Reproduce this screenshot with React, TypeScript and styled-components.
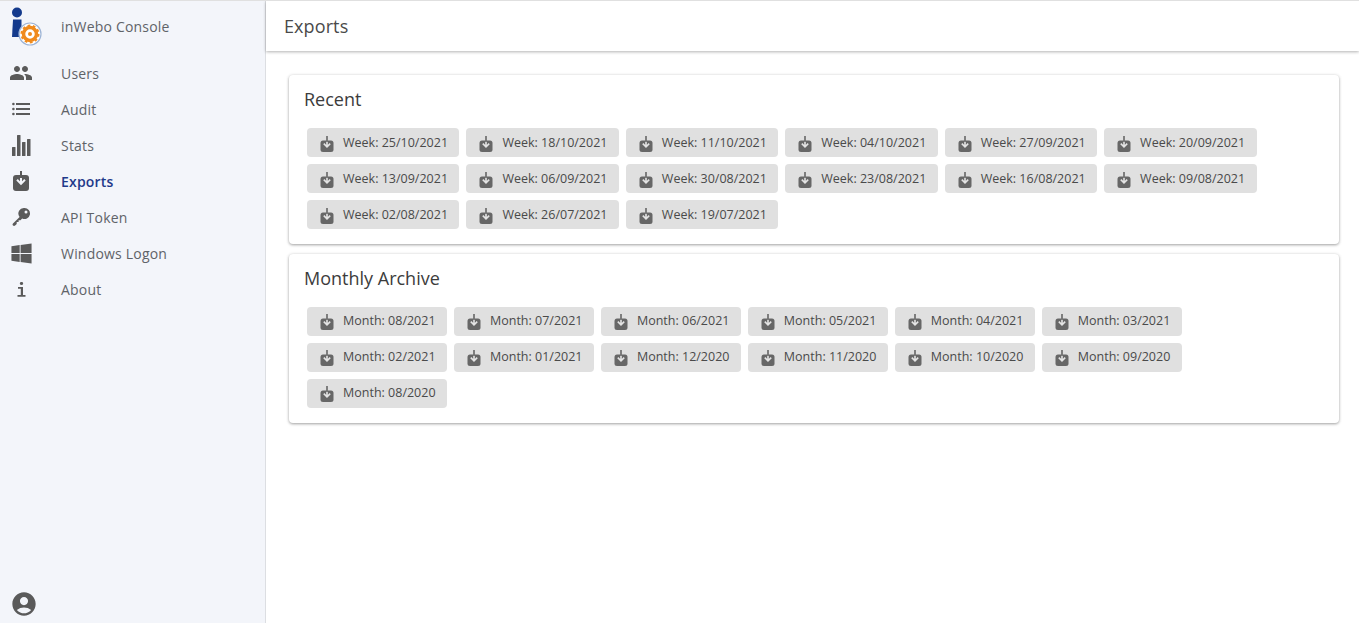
import React from "react";
import styled, { createGlobalStyle } from "styled-components";
import { MdPeople, MdAccountCircle } from "react-icons/md";
import { FaWindows } from "react-icons/fa";

const GlobalStyle = createGlobalStyle`
  html, body {
    margin: 0;
    padding: 0;
    height: 100%;
    background: #fff;
    font-family: "Open Sans", "Liberation Sans", sans-serif;
  }
`;

const Page = styled.div`
  display: flex;
  height: 623px;
  overflow: hidden;
  border-top: 1px solid #e0e0e0;
  box-sizing: border-box;
`;

// Left navigation
const Sidebar = styled.aside`
  display: flex;
  flex-direction: column;
  width: 266px;
  flex-shrink: 0;
  box-sizing: border-box;
  background: #f3f5fa;
  border-right: 1px solid #dcdee2;
`;

const Brand = styled.div`
  display: flex;
  align-items: center;
  height: 54px;
  padding: 0 0 4px 10px;
  box-sizing: border-box;
  color: #5f6368;
  font-size: 14px;
  letter-spacing: 0.2px;

  svg {
    margin-bottom: 4px;
  }
`;

const BrandLabel = styled.span`
  margin-left: 19px;
`;

const NavList = styled.nav`
  display: flex;
  flex-direction: column;
`;

const NavItem = styled.div<{ $active?: boolean }>`
  display: flex;
  align-items: center;
  height: 36px;
  font-size: 14px;
  letter-spacing: 0.2px;
  font-weight: ${(p) => (p.$active ? 600 : 400)};
  color: ${(p) => (p.$active ? "#1f3a8a" : "#5f6368")};
`;

const NavIcon = styled.span`
  display: flex;
  align-items: center;
  justify-content: center;
  width: 61px;
  padding-right: 19px;
  box-sizing: border-box;
  color: #5a5a5a;
`;

const SidebarFoot = styled.div`
  display: flex;
  margin-top: auto;
  height: 33px;
  padding-left: 10px;
  color: #5a5a5a;
`;

// Main area
const Main = styled.main`
  display: flex;
  flex-direction: column;
  flex: 1;
  min-width: 0;
`;

const TopBar = styled.header`
  display: flex;
  align-items: center;
  height: 50px;
  padding-left: 18px;
  background: #fff;
  color: #4a4a4a;
  font-size: 18px;
  letter-spacing: 0.1px;
  box-shadow: 0 1px 3px rgba(0, 0, 0, 0.3);
`;

const Content = styled.div`
  display: flex;
  flex-direction: column;
  gap: 9.6px;
  padding: 24px 20px 0 23px;
`;

const Card = styled.section`
  padding: 0 15px 15px 18px;
  background: #fff;
  border-radius: 4px;
  box-shadow: 0 1px 3px rgba(0, 0, 0, 0.35), 0 0 4px rgba(0, 0, 0, 0.06);
`;

const CardTitle = styled.h2`
  margin: 0 0 0 -3px;
  height: 53px;
  line-height: 49px;
  font-size: 18px;
  font-weight: 400;
  color: #3c3c3c;
`;

const ChipRows = styled.div`
  display: flex;
  flex-direction: column;
  gap: 7px;
`;

const ChipRow = styled.div`
  display: flex;
  gap: 7px;
`;

const Chip = styled.button`
  display: flex;
  align-items: center;
  height: 29px;
  padding: 0 11.4px 0 13px;
  border: 0;
  border-radius: 4px;
  background: #e0e0e0;
  color: #4a4a4a;
  font-family: inherit;
  font-size: 12.5px;
  white-space: nowrap;
`;

const ChipLabel = styled.span`
  margin-left: 9px;
  margin-top: -1px;
`;

const ExportIcon = () => (
  <svg width="14" height="16" viewBox="0 0 14 16" style={{ marginTop: 2 }}>
    <rect x="0.500" y="4.500" width="13" height="11.500" rx="2.500" fill="#676767" />
    <path d="M7 4.500v5.500M3.800 7.600 7 10.800l3.200-3.200" fill="none" stroke="#e4e4e4" strokeWidth="1.600" />
    <rect x="6.200" y="0" width="1.600" height="6" fill="#676767" />
  </svg>
);

const ListIcon = () => (
  <svg width="18" height="14" viewBox="0 0 18 14" fill="#5a5a5a">
    <circle cx="1.400" cy="2" r="1.300" />
    <circle cx="1.400" cy="7" r="1.300" />
    <circle cx="1.400" cy="12" r="1.300" />
    <rect x="4" y="1" width="14" height="2" />
    <rect x="4" y="6" width="14" height="2" />
    <rect x="4" y="11" width="14" height="2" />
  </svg>
);

const StatsIcon = () => (
  <svg width="19" height="21" viewBox="0 0 19 21" fill="#5a5a5a">
    <rect x="0" y="12" width="3.500" height="9" rx="0.500" />
    <rect x="5" y="0" width="3.500" height="21" rx="0.500" />
    <rect x="10" y="7" width="3.500" height="14" rx="0.500" />
    <rect x="15" y="4" width="3.500" height="17" rx="0.500" />
  </svg>
);

const NavExportIcon = () => (
  <svg width="16" height="20" viewBox="0 0 16 20">
    <rect x="0" y="4" width="16" height="16" rx="3" fill="#5a5a5a" />
    <path d="M8 4v8.500M4 8.800 8 12.800l4-4" fill="none" stroke="#f3f5fa" strokeWidth="2" />
    <rect x="7" y="0" width="2" height="7" fill="#5a5a5a" />
  </svg>
);

const KeyIcon = () => (
  <svg width="20" height="20" viewBox="0 0 20 20" fill="#5a5a5a">
    <path d="M13.500 1a5.500 5.500 0 1 1-2.300 10.500L9.500 13.200H7.600v1.900H5.700V17l-1.600 1.600c-.6.600-1.500.6-2.100 0s-.6-1.500 0-2.100l6.600-6.600A5.500 5.500 0 0 1 13.500 1z" />
    <circle cx="15" cy="5" r="1.500" fill="#f3f5fa" />
  </svg>
);

const InfoGlyph = () => (
  <svg width="9" height="15" viewBox="0 0 9 15" fill="#5a5a5a">
    <circle cx="4.500" cy="1.500" r="1.600" />
    <path d="M1 5h5v8h2.500v1.700H.5v-1.700h3.300V6.700H1z" />
  </svg>
);

const Logo = () => (
  <svg width="32" height="46" viewBox="0 0 32 46">
    <circle cx="7" cy="11.500" r="5" fill="#143a8c" />
    <path d="M3 18.500h8.500V36H2z" fill="#143a8c" />
    <circle cx="20" cy="33" r="11" fill="#fff" stroke="#9db4d6" strokeWidth="1.200" />
    <circle cx="20" cy="33" r="6.500" fill="none" stroke="#f08a1c" strokeWidth="3.500" />
    <circle cx="20" cy="33" r="8.500" fill="none" stroke="#f08a1c" strokeWidth="2" strokeDasharray="2.700 2.640" />
    <circle cx="20" cy="33" r="2" fill="#f08a1c" />
  </svg>
);

const navItems: { label: string; icon: React.ReactNode; active?: boolean }[] = [
  { label: "Users", icon: <MdPeople size={24} /> },
  { label: "Audit", icon: <ListIcon /> },
  { label: "Stats", icon: <StatsIcon /> },
  { label: "Exports", icon: <NavExportIcon />, active: true },
  { label: "API Token", icon: <KeyIcon /> },
  { label: "Windows Logon", icon: <FaWindows size={23} /> },
  { label: "About", icon: <InfoGlyph /> },
];

const weeks = [
  "25/10/2021", "18/10/2021", "11/10/2021", "04/10/2021", "27/09/2021", "20/09/2021",
  "13/09/2021", "06/09/2021", "30/08/2021", "23/08/2021", "16/08/2021", "09/08/2021",
  "02/08/2021", "26/07/2021", "19/07/2021",
].map((d) => `Week: ${d}`);

const months = [
  "08/2021", "07/2021", "06/2021", "05/2021", "04/2021", "03/2021",
  "02/2021", "01/2021", "12/2020", "11/2020", "10/2020", "09/2020",
  "08/2020",
].map((d) => `Month: ${d}`);

// the app lays these out in rows of six
const chunk = (items: string[], size = 6) => {
  const rows: string[][] = [];
  for (let i = 0; i < items.length; i += size) rows.push(items.slice(i, i + size));
  return rows;
};

const ExportCard = ({ title, items }: { title: string; items: string[] }) => (
  <Card>
    <CardTitle>{title}</CardTitle>
    <ChipRows>
      {chunk(items).map((row, i) => (
        <ChipRow key={i}>
          {row.map((label) => (
            <Chip key={label}>
              <ExportIcon />
              <ChipLabel>{label}</ChipLabel>
            </Chip>
          ))}
        </ChipRow>
      ))}
    </ChipRows>
  </Card>
);

export default function App() {
  return (
    <>
      <GlobalStyle />
      <Page>
        <Sidebar>
          <Brand>
            <Logo />
            <BrandLabel>inWebo Console</BrandLabel>
          </Brand>
          <NavList>
            {navItems.map((item) => (
              <NavItem key={item.label} $active={item.active}>
                <NavIcon>{item.icon}</NavIcon>
                {item.label}
              </NavItem>
            ))}
          </NavList>
          <SidebarFoot>
            <MdAccountCircle size={28} />
          </SidebarFoot>
        </Sidebar>
        <Main>
          <TopBar>Exports</TopBar>
          <Content>
            <ExportCard title="Recent" items={weeks} />
            <ExportCard title="Monthly Archive" items={months} />
          </Content>
        </Main>
      </Page>
    </>
  );
}
